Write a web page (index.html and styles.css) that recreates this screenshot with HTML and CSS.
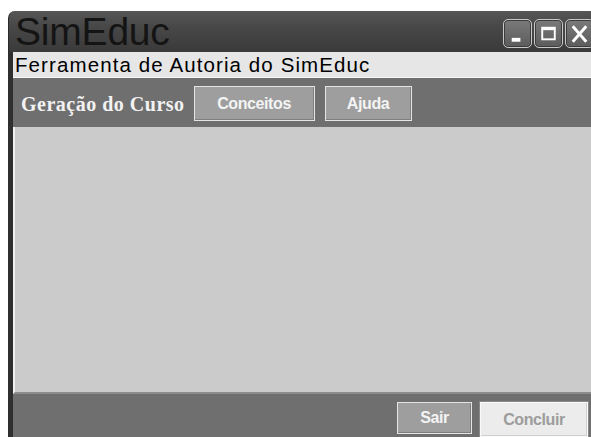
FILE: index.html
```html
<!DOCTYPE html>
<html lang="pt">
<head>
<meta charset="utf-8">
<title>SimEduc</title>
<link rel="stylesheet" href="styles.css">
</head>
<body>
<div class="window">
  <header class="titlebar">
    <h1 class="app-title">SimEduc</h1>
    <div class="win-controls">
      <button class="win-btn" aria-label="Minimizar">
        <svg width="28" height="28" viewBox="0 0 28 28"><rect x="8" y="18" width="9" height="4" fill="#fff"/></svg>
      </button>
      <button class="win-btn" aria-label="Maximizar">
        <svg width="28" height="28" viewBox="0 0 28 28"><rect x="7.5" y="7.5" width="13" height="12" fill="none" stroke="#fff" stroke-width="2"/><rect x="7" y="7" width="14" height="3" fill="#fff"/></svg>
      </button>
      <button class="win-btn" aria-label="Fechar">
        <svg width="28" height="28" viewBox="0 0 28 28"><path d="M7 6 L21 22 M21 6 L7 22" stroke="#fff" stroke-width="3" fill="none"/></svg>
      </button>
    </div>
  </header>
  <div class="frame">
    <div class="subtitle">Ferramenta de Autoria do SimEduc</div>
    <nav class="toolbar">
      <span class="section-name">Geração do Curso</span>
      <button class="btn btn-concepts">Conceitos</button>
      <button class="btn btn-help">Ajuda</button>
    </nav>
    <main class="workspace"></main>
    <footer class="footer">
      <button class="btn btn-exit">Sair</button>
      <button class="btn btn-finish" disabled>Concluir</button>
    </footer>
  </div>
</div>
</body>
</html>
```

FILE: styles.css
```css
html, body {
  margin: 0;
  padding: 0;
  background: #ffffff;
  overflow: hidden;
}

body {
  width: 591px;
  height: 437px;
}

.window {
  margin: 11px 0 0 8px;
  width: 583px;
  height: 426px;
  display: flex;
  flex-direction: column;
  font-family: "Liberation Sans", Arial, sans-serif;
}

/* dark caption bar */
.titlebar {
  height: 41px;
  flex: none;
  display: flex;
  align-items: flex-start;
  justify-content: space-between;
  background: linear-gradient(#565656, #474747 40%, #3a3a3a);
  border-radius: 7px 0 0 0;
  border-left: 1px solid #2a2a2a;
  overflow: hidden;
  box-sizing: border-box;
}

.app-title {
  margin: 0 0 0 6px;
  font-size: 39px;
  font-weight: normal;
  line-height: 42px;
  color: #141414;
  letter-spacing: -0.2px;
}

.win-controls {
  display: flex;
  gap: 2px;
  margin-top: 8px;
  margin-right: -3px;
}

.win-btn {
  width: 29px;
  height: 29px;
  padding: 0;
  border: 1px solid #c8c8c8;
  border-radius: 5px;
  background: linear-gradient(#7a7a7a, #5c5c5c);
  box-shadow: inset 0 0 0 1px #3c3c3c;
  display: flex;
  align-items: center;
  justify-content: center;
}

.win-btn svg {
  display: block;
}

/* content under the caption, with the left frame edge */
.frame {
  flex: 1;
  display: flex;
  flex-direction: column;
  border-left: 5px solid #2f2f2f;
  background: #6f6f6f;
}

.subtitle {
  height: 25px;
  flex: none;
  background: #e6e6e6;
  border-bottom: 1px solid #f7f7f7;
  font-size: 20.5px;
  letter-spacing: 1.1px;
  line-height: 26px;
  color: #000;
  padding-left: 2px;
}

.toolbar {
  height: 49px;
  flex: none;
  display: flex;
  align-items: flex-start;
  padding-top: 8px;
  box-sizing: border-box;
  background: #6f6f6f;
}

.section-name {
  font-family: "Liberation Serif", "Times New Roman", serif;
  font-weight: bold;
  font-size: 20px;
  letter-spacing: 0.5px;
  color: #f2f2f2;
  margin: 8px 9px 0 8px;
  line-height: 20px;
}

.btn {
  font-family: "Liberation Sans", Arial, sans-serif;
  font-weight: bold;
  font-size: 16px;
  color: #f4f4f4;
  background: #9e9e9e;
  border: 1px solid #e4e4e4;
  box-shadow: inset -1px -1px 0 #7e7e7e;
  padding: 0;
  letter-spacing: -0.4px;
}

.btn-concepts {
  width: 121px;
  height: 35px;
}

.btn-help {
  width: 87px;
  height: 35px;
  margin-left: 10px;
}

.workspace {
  flex: 1;
  background: #cbcbcb;
  border-left: 2px solid #f0f0f0;
  border-bottom: 2px solid #8d8d8d;
}

.footer {
  height: 43px;
  flex: none;
  display: flex;
  justify-content: flex-end;
  align-items: flex-start;
  padding: 8px 3px 0 0;
  box-sizing: border-box;
  gap: 8px;
}

.btn-exit {
  width: 75px;
  height: 32px;
}

.btn-finish {
  width: 108px;
  height: 35px;
  background: #ececec;
  color: #9c9c9c;
  border: 1px solid #fafafa;
  box-shadow: inset -1px -1px 0 #d0d0d0, 0 0 0 1px #8a8a8a;
}
```
